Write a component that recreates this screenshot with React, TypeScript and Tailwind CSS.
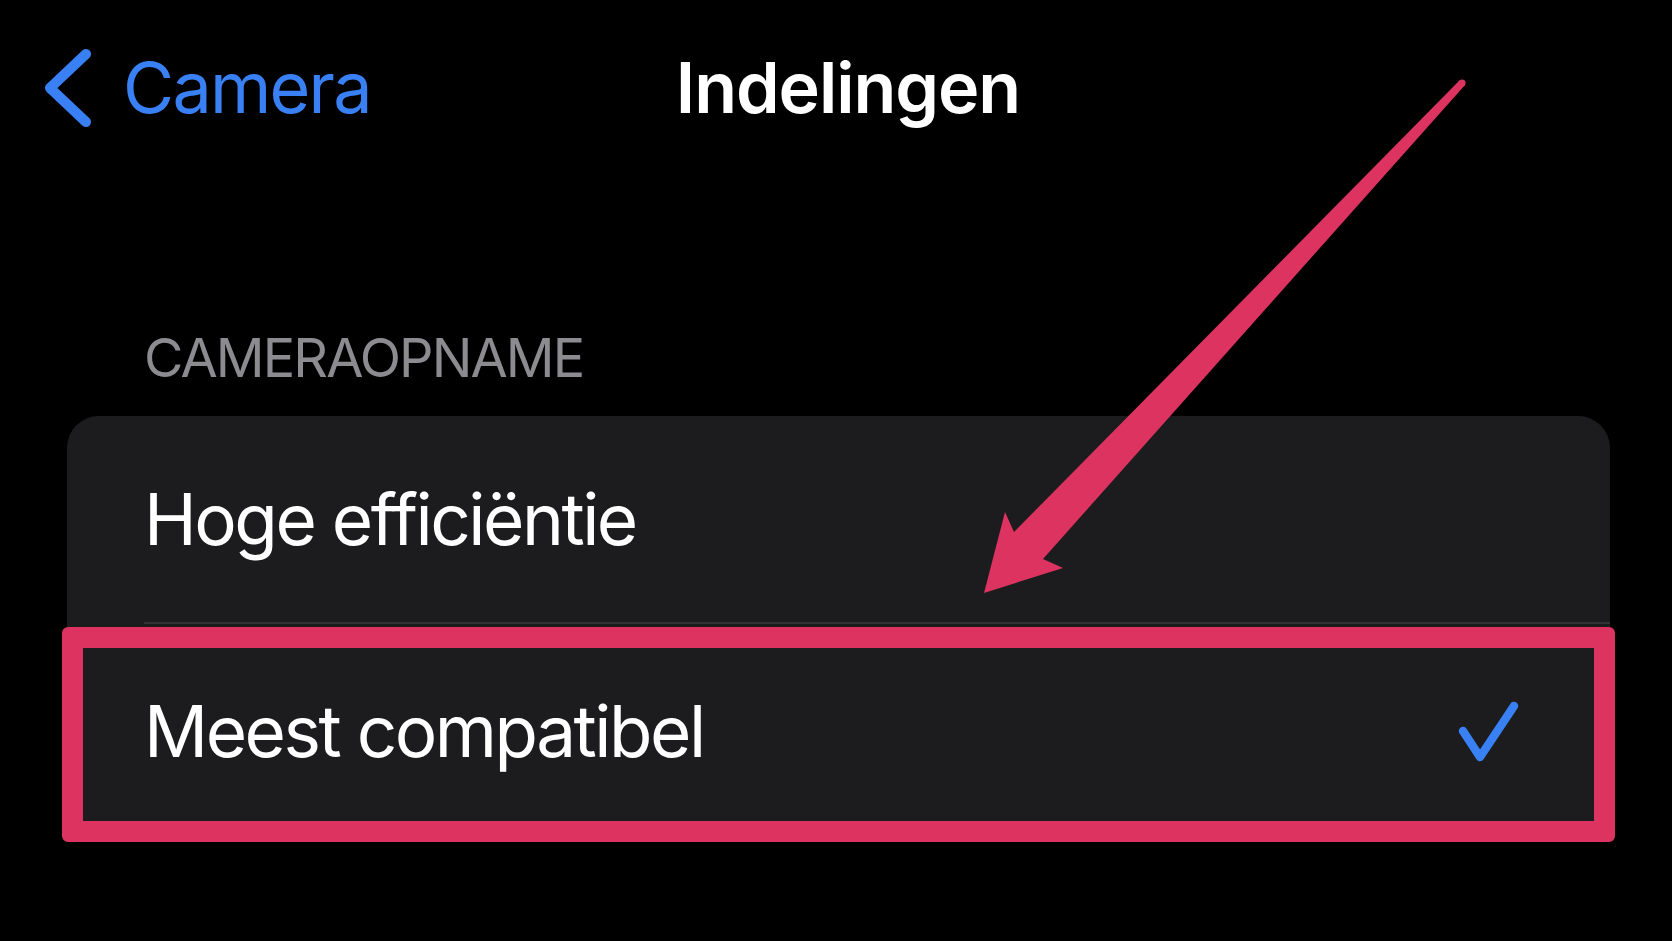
import { useState } from 'react';

const options = ['Hoge efficiëntie', 'Meest compatibel'];

function BackChevron() {
  return (
    <svg width="56" height="80" viewBox="0 0 56 80" className="shrink-0">
      <path
        d="M44 6 L8 40 L44 74"
        fill="none"
        stroke="#3a80f5"
        strokeWidth="10"
        strokeLinecap="round"
        strokeLinejoin="round"
      />
    </svg>
  );
}

function Check() {
  return (
    <svg width="64" height="64" viewBox="0 0 64 64" className="shrink-0">
      <path
        d="M7 32 L24 58 L58 7"
        fill="none"
        stroke="#3a80f5"
        strokeWidth="8.5"
        strokeLinecap="round"
        strokeLinejoin="round"
      />
    </svg>
  );
}

// pink annotation arrow drawn over the list
function Pointer() {
  return (
    <svg
      className="pointer-events-none absolute inset-0"
      width="1672"
      height="941"
      viewBox="0 0 1672 941"
    >
      <circle cx="1462" cy="83" r="3.6" fill="#dc3360" />
      <polygon
        points="1459.4,80.6 1014,532 1005,512 984,593 1063,568 1043,559 1464.6,85.4"
        fill="#dc3360"
      />
    </svg>
  );
}

export default function App() {
  const [selected, setSelected] = useState(1);

  return (
    <div className="relative h-[941px] w-[1672px] overflow-hidden bg-black font-['Inter',sans-serif]">
      <div className="grid h-[176px] grid-cols-[1fr_auto_1fr] items-center">
        <button className="flex items-center gap-[25px] pl-[42px] text-[70px] leading-none text-[#3a80f5]">
          <BackChevron />
          <span className="tracking-[-0.025em]">Camera</span>
        </button>
        <h1 className="ml-[24px] text-[70px] font-semibold leading-none tracking-[-0.015em] text-white">
          Indelingen
        </h1>
        <div />
      </div>

      <div className="pt-[155px] pl-[144px] text-[54px] leading-none tracking-[-0.035em] text-[#8c8c90]">
        CAMERAOPNAME
      </div>

      <div className="mt-[31px] ml-[67px] w-[1543px] rounded-[32px] bg-[#1c1c1e]">
        {options.map((label, i) => (
          <div
            key={label}
            onClick={() => setSelected(i)}
            className={`relative flex cursor-pointer pl-[77px] ${i === 0 ? 'h-[208px]' : 'h-[214px]'}`}
          >
            <div
              className={`flex flex-1 items-center justify-between pr-[90px] ${
                i === 0 ? 'border-b-2 border-[#323234]' : ''
              }`}
            >
              <span className="text-[71px] leading-none tracking-[-0.035em] text-white">{label}</span>
              {selected === i && <Check />}
            </div>
            {i === 1 && (
              <div className="absolute -left-[5px] -right-[5px] top-[3px] -bottom-[4px] rounded-[6px] border-[21px] border-[#dc3360]" />
            )}
          </div>
        ))}
      </div>

      <Pointer />
    </div>
  );
}
